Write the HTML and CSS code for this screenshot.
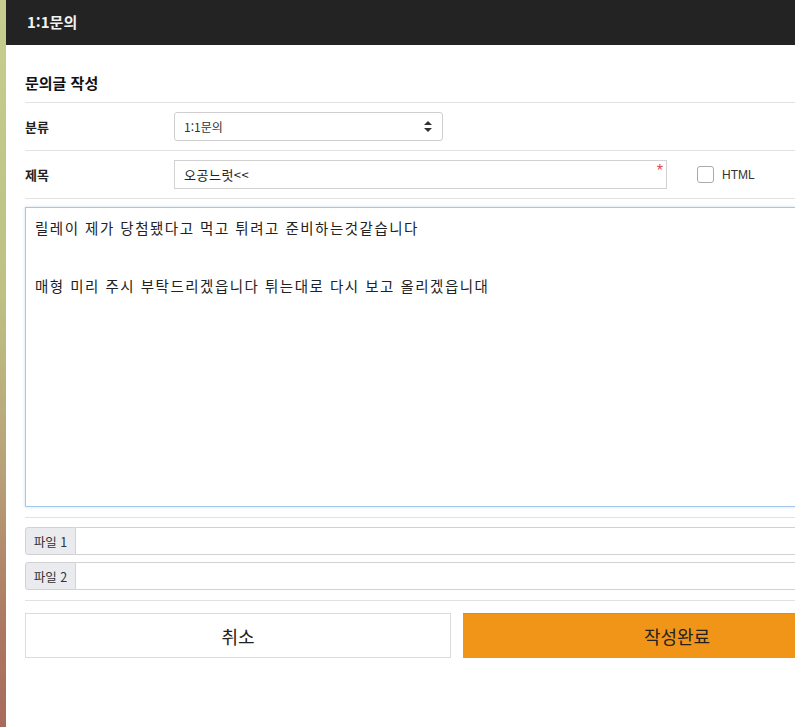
FILE: index.html
```html
<!DOCTYPE html>
<html lang="ko">
<head>
<meta charset="utf-8">
<title>1:1문의</title>
<link rel="stylesheet" href="styles.css">
</head>
<body>
<div class="strip"></div>
<div class="main">
  <header class="header">1:1문의</header>
  <div class="content">
    <h2 class="section-title">문의글 작성</h2>
    <div class="row">
      <div class="label">분류</div>
      <div class="select">
        <span>1:1문의</span>
        <svg class="arrows" width="8" height="11" viewBox="0 0 8 11"><path d="M4 0 L8 4 L0 4 Z M0 7 L8 7 L4 11 Z" fill="#333"/></svg>
      </div>
    </div>
    <div class="row">
      <div class="label">제목</div>
      <div class="input-wrap">
        <input class="text-input" type="text" value="오공느럿<<">
        <span class="req">*</span>
      </div>
      <label class="check"><span class="box"></span><span class="check-text">HTML</span></label>
    </div>
    <div class="editor-row">
      <textarea class="editor">릴레이 제가 당첨됐다고 먹고 튀려고 준비하는것같습니다

매형 미리 주시 부탁드리겠읍니다 튀는대로 다시 보고 올리겠읍니대</textarea>
    </div>
    <div class="files">
      <div class="file"><span class="file-label">파일 1</span><span class="file-field"></span></div>
      <div class="file"><span class="file-label">파일 2</span><span class="file-field"></span></div>
    </div>
    <div class="buttons">
      <button class="btn btn-cancel">취소</button>
      <button class="btn btn-submit">작성완료</button>
    </div>
  </div>
</div>
</body>
</html>
```
FILE: styles.css
```css
html, body {
  margin: 0;
  padding: 0;
  height: 100%;
  background: #fff;
}
body {
  display: flex;
  overflow: hidden;
  font-family: "Noto Sans CJK KR", "Liberation Sans", sans-serif;
  color: #222;
}
.strip {
  width: 6px;
  flex: none;
  background: linear-gradient(to bottom, #c6cd8e 0%, #bdc284 40%, #b8a077 65%, #ad7a63 85%, #a86a5c 100%);
}
.main {
  flex: 1;
  min-width: 0;
  overflow: hidden;
}
.header {
  height: 45px;
  line-height: 44px;
  background: #232323;
  color: #f2f2f2;
  font-weight: bold;
  font-size: 15px;
  padding-left: 21px;
}
.content {
  width: 866px;
  padding-left: 19px;
}
.section-title {
  margin: 0;
  font-size: 15px;
  font-weight: bold;
  line-height: 20px;
  padding: 28px 0 9px;
  border-bottom: 1px solid #e2e2e2;
  color: #111;
}
.row {
  display: flex;
  align-items: center;
  padding: 9px 0;
  border-bottom: 1px solid #e2e2e2;
}
.label {
  width: 149px;
  flex: none;
  font-size: 13px;
  font-weight: bold;
  color: #222;
}
.select {
  width: 269px;
  height: 29px;
  box-sizing: border-box;
  border: 1px solid #cfcfcf;
  border-radius: 3px;
  display: flex;
  align-items: center;
  justify-content: space-between;
  padding: 0 10px 0 9px;
  font-size: 12px;
  color: #333;
}
.arrows { display: block; }
.input-wrap {
  position: relative;
  width: 493px;
  height: 29px;
}
.text-input {
  width: 100%;
  height: 29px;
  box-sizing: border-box;
  border: 1px solid #d2d2d2;
  border-radius: 0;
  padding: 0 9px;
  margin: 0;
  font-family: "Noto Sans CJK KR", "Liberation Sans", sans-serif;
  font-size: 13px;
  letter-spacing: 0.5px;
  color: #222;
  outline: none;
}
.req {
  position: absolute;
  right: 4px;
  top: 4px;
  color: #e8474a;
  font-size: 16px;
  line-height: 14px;
  font-family: "Liberation Sans", sans-serif;
}
.check {
  display: flex;
  align-items: center;
  margin-left: 30px;
}
.box {
  width: 15px;
  height: 15px;
  border: 1px solid #aaa;
  border-radius: 3px;
  background: #fff;
}
.check-text {
  margin-left: 8px;
  font-family: "Liberation Sans", sans-serif;
  font-size: 12px;
  color: #333;
}
.editor-row {
  padding: 8px 0 10px;
  border-bottom: 1px solid #e2e2e2;
}
.editor {
  display: block;
  width: 866px;
  height: 300px;
  box-sizing: border-box;
  margin: 0;
  border: 1px solid #a4c6ea;
  box-shadow: 0 0 3px rgba(120, 170, 225, 0.35);
  padding: 5px 9px;
  resize: none;
  outline: none;
  font-family: "Noto Sans CJK KR", sans-serif;
  font-size: 14.5px;
  letter-spacing: 1.5px;
  line-height: 29px;
  color: #222;
  background: #fff;
}
.files {
  display: flex;
  flex-direction: column;
  gap: 7px;
  padding: 9px 0 10px;
  border-bottom: 1px solid #e2e2e2;
}
.file {
  display: flex;
  height: 28px;
}
.file-label {
  width: 51px;
  box-sizing: border-box;
  border: 1px solid #d2d2d2;
  border-radius: 3px 0 0 3px;
  background: #eaebee;
  font-size: 12.5px;
  color: #333;
  display: flex;
  align-items: center;
  justify-content: center;
}
.file-field {
  flex: 1;
  border: 1px solid #d2d2d2;
  border-left: none;
}
.buttons {
  display: grid;
  grid-template-columns: 426px 428px;
  gap: 12px;
  padding-top: 12px;
}
.btn {
  height: 45px;
  margin: 0;
  font-family: "Noto Sans CJK KR", sans-serif;
  font-size: 18px;
  color: #222;
  cursor: pointer;
}
.btn-cancel {
  background: #fff;
  border: 1px solid #dcdcdc;
}
.btn-submit {
  background: #f19519;
  border: none;
  border-top: 1px solid #e08a12;
}
```
